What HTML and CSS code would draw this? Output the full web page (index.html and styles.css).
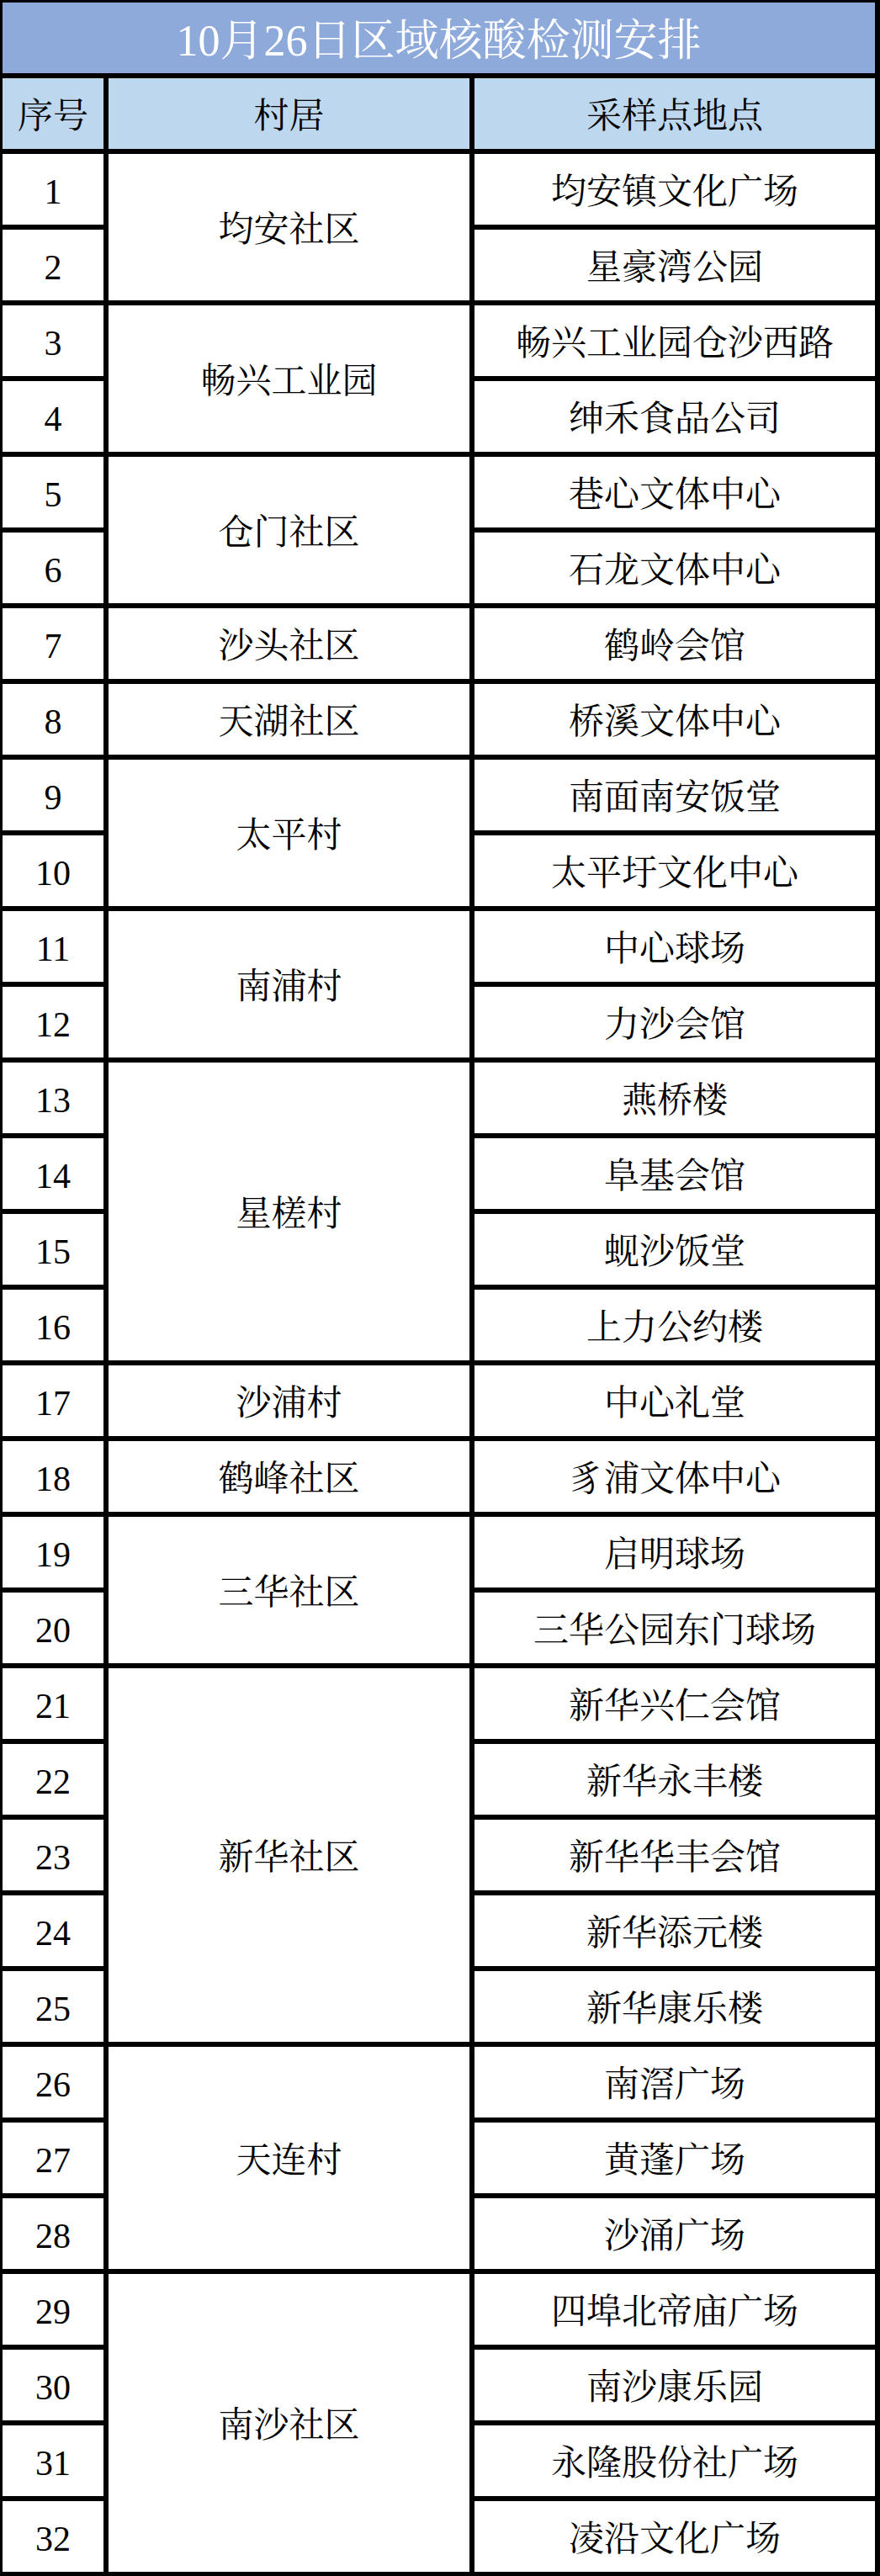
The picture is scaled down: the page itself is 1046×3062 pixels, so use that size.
FILE: index.html
```html
<!DOCTYPE html>
<html lang="zh-CN">
<head>
<meta charset="utf-8">
<title>10月26日区域核酸检测安排</title>
<link rel="stylesheet" href="styles.css">
</head>
<body>
<div class="sheet">
  <div class="title">10月26日区域核酸检测安排</div>
  <div class="hd num">序号</div>
  <div class="hd vil">村居</div>
  <div class="hd site">采样点地点</div>

  <div class="num">1</div><div class="vil span-2">均安社区</div><div class="site">均安镇文化广场</div>
  <div class="num">2</div><div class="site">星豪湾公园</div>

  <div class="num">3</div><div class="vil span-2">畅兴工业园</div><div class="site">畅兴工业园仓沙西路</div>
  <div class="num">4</div><div class="site">绅禾食品公司</div>

  <div class="num">5</div><div class="vil span-2">仓门社区</div><div class="site">巷心文体中心</div>
  <div class="num">6</div><div class="site">石龙文体中心</div>

  <div class="num">7</div><div class="vil">沙头社区</div><div class="site">鹤岭会馆</div>

  <div class="num">8</div><div class="vil">天湖社区</div><div class="site">桥溪文体中心</div>

  <div class="num">9</div><div class="vil span-2">太平村</div><div class="site">南面南安饭堂</div>
  <div class="num">10</div><div class="site">太平圩文化中心</div>

  <div class="num">11</div><div class="vil span-2">南浦村</div><div class="site">中心球场</div>
  <div class="num">12</div><div class="site">力沙会馆</div>

  <div class="num">13</div><div class="vil span-4">星槎村</div><div class="site">燕桥楼</div>
  <div class="num">14</div><div class="site">阜基会馆</div>
  <div class="num">15</div><div class="site">蚬沙饭堂</div>
  <div class="num">16</div><div class="site">上力公约楼</div>

  <div class="num">17</div><div class="vil">沙浦村</div><div class="site">中心礼堂</div>

  <div class="num">18</div><div class="vil">鹤峰社区</div><div class="site">豸浦文体中心</div>

  <div class="num">19</div><div class="vil span-2">三华社区</div><div class="site">启明球场</div>
  <div class="num">20</div><div class="site">三华公园东门球场</div>

  <div class="num">21</div><div class="vil span-5">新华社区</div><div class="site">新华兴仁会馆</div>
  <div class="num">22</div><div class="site">新华永丰楼</div>
  <div class="num">23</div><div class="site">新华华丰会馆</div>
  <div class="num">24</div><div class="site">新华添元楼</div>
  <div class="num">25</div><div class="site">新华康乐楼</div>

  <div class="num">26</div><div class="vil span-3">天连村</div><div class="site">南滘广场</div>
  <div class="num">27</div><div class="site">黄蓬广场</div>
  <div class="num">28</div><div class="site">沙涌广场</div>

  <div class="num">29</div><div class="vil span-4">南沙社区</div><div class="site">四埠北帝庙广场</div>
  <div class="num">30</div><div class="site">南沙康乐园</div>
  <div class="num">31</div><div class="site">永隆股份社广场</div>
  <div class="num">32</div><div class="site">凌沿文化广场</div>
</div>
</body>
</html>
```

FILE: styles.css
```css
html, body {
  margin: 0;
  padding: 0;
  background: #ffffff;
}

.sheet {
  width: 1046px;
  height: 3062px;
  box-sizing: border-box;
  display: grid;
  grid-template-columns: 120px 429px 476px;
  grid-auto-rows: 84px;
  gap: 6px;
  padding: 3px 6px 5px 3px;
  background: #000000;
  font-family: "Liberation Serif", "Noto Serif CJK SC", "Noto Sans CJK SC", serif;
  color: #000000;
}

.sheet > div {
  display: flex;
  align-items: center;
  justify-content: center;
  box-sizing: border-box;
  padding-top: 6px;
  background: #ffffff;
  font-size: 42px;
  line-height: 1;
  white-space: nowrap;
}

.sheet > .title {
  grid-column: 1 / -1;
  background: #8eaadb;
  color: #ffffff;
  font-size: 52px;
  padding-top: 8px;
}

.sheet > .hd {
  background: #bdd7ee;
}

.num { grid-column: 1; }
.vil { grid-column: 2; }
.site { grid-column: 3; }

.span-2 { grid-row: span 2; }
.span-3 { grid-row: span 3; }
.span-4 { grid-row: span 4; }
.span-5 { grid-row: span 5; }
```
